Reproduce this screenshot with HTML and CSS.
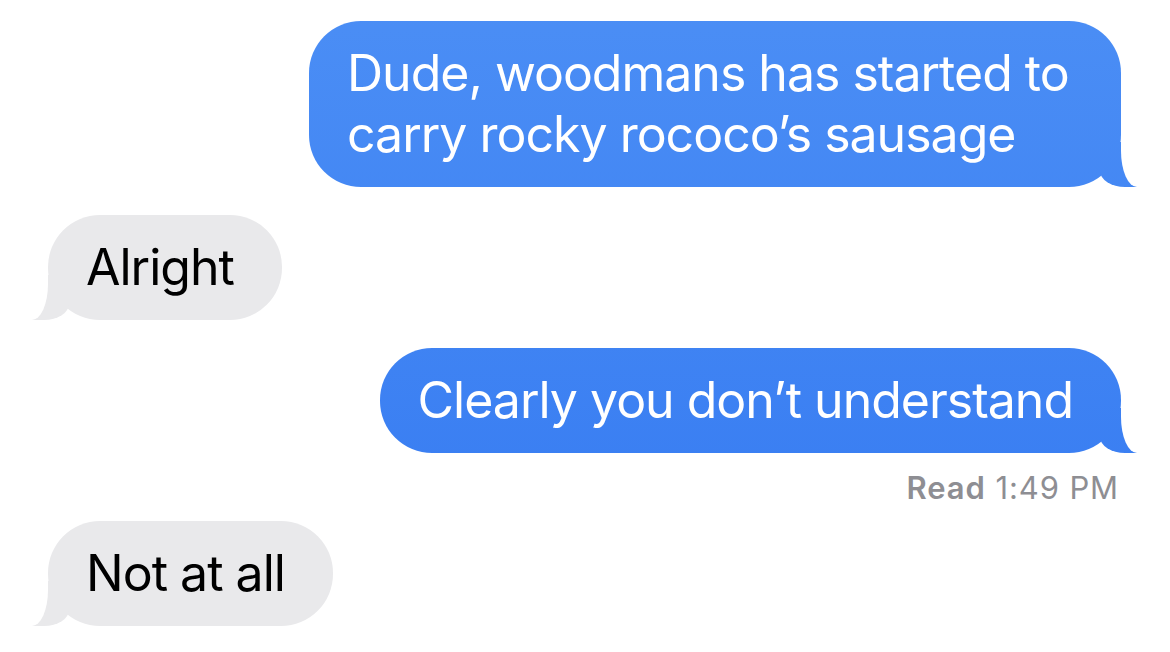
FILE: index.html
```html
<!DOCTYPE html>
<html lang="en">
<head>
    <meta charset="UTF-8">
    <meta name="viewport" content="width=device-width, initial-scale=1.0">
    <title>Messages</title>
    <link rel="stylesheet" href="styles.css">
</head>
<body>
    <div class="thread">
        <div class="bubble sent">Dude, woodmans has started to carry rocky rococo’s sausage</div>
        <div class="bubble received">Alright</div>
        <div class="bubble sent">Clearly you don’t understand</div>
        <div class="receipt"><b>Read</b> 1:49 PM</div>
        <div class="bubble received">Not at all</div>
    </div>
</body>
</html>
```

FILE: styles.css
```css
:root {
    --sent-color: linear-gradient(#4b8ef5, #3479f1);
    --received-color: #e9e9eb;
    --meta-color: #8e8e93;
}

body {
    margin: 0;
    background: #fff;
    font-family: Inter, "Liberation Sans", sans-serif;
}

.thread {
    display: flex;
    flex-direction: column;
    gap: 28px;
    padding: 21px 49px 0 48px;
}

.bubble {
    position: relative;
    isolation: isolate;
    box-sizing: border-box;
    max-width: 812px;
    padding: 22px 48px 22px 38px;
    border-radius: 52px;
    font-size: 50px;
    line-height: 61px;
    letter-spacing: -1px;
}

/* tail: a coloured block under the corner, carved by a white block beside it */
.bubble::before,
.bubble::after {
    content: "";
    position: absolute;
    z-index: -1;
    bottom: 0;
}

.bubble::before {
    width: 37px;
    height: 45px;
}

.bubble::after {
    width: 30px;
    height: 46px;
    background: #fff;
}

.sent {
    align-self: flex-end;
    background: var(--sent-color) fixed;
    color: #fff;
}

.sent::before {
    right: -16px;
    background: var(--sent-color) fixed;
    border-bottom-left-radius: 25px 16px;
}

.sent::after {
    right: -30px;
    border-bottom-left-radius: 16px 36px;
}

.received {
    align-self: flex-start;
    background: var(--received-color);
    color: #000;
}

.received::before {
    left: -16px;
    background: var(--received-color);
    border-bottom-right-radius: 25px 16px;
}

.received::after {
    left: -30px;
    border-bottom-right-radius: 16px 36px;
}

.receipt {
    align-self: flex-end;
    margin: -11px 2px -13px 0;
    font-size: 31px;
    line-height: 36px;
    letter-spacing: 0.9px;
    color: var(--meta-color);
}

.receipt b {
    font-weight: 600;
}
```
